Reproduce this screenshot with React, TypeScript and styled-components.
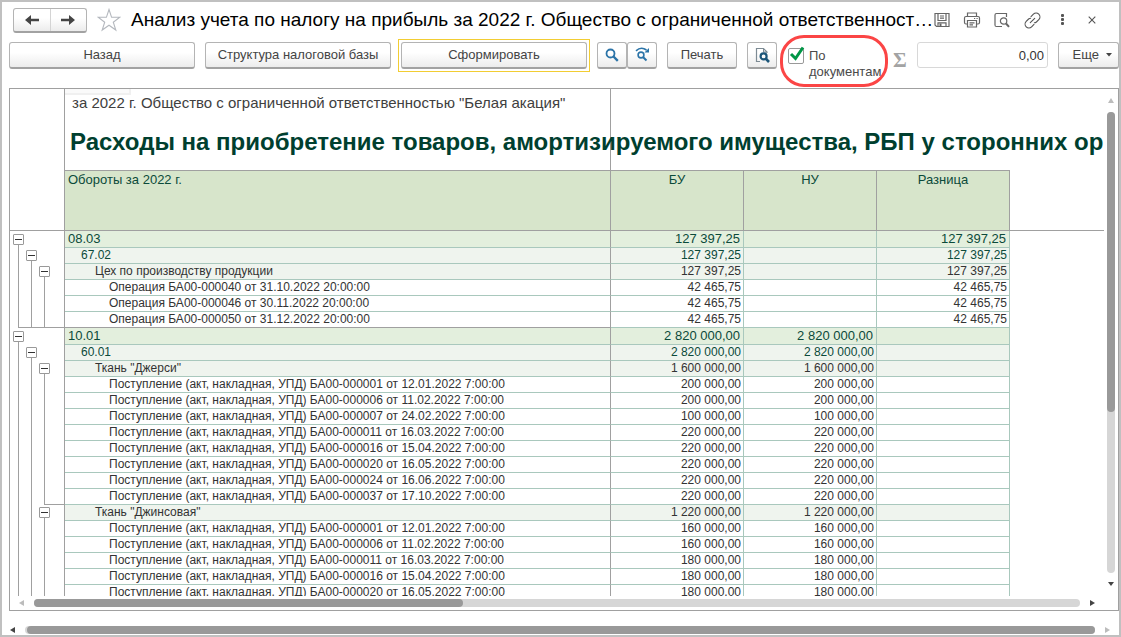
import React from "react";
import styled, { createGlobalStyle, css } from "styled-components";

const sans = `"Liberation Sans", Arial, sans-serif`;
const line = "#a0a0a0";
const cellLine = "#a9c8bd";

const GlobalStyle = createGlobalStyle`
  *, *::before, *::after { box-sizing: border-box; }
  body { margin: 0; background: #fff; font-family: ${sans}; }
  button, input { font-family: inherit; }
`;

const Window = styled.main`
  display: flex;
  flex-direction: column;
  height: 100vh;
  border: 2px solid #c0c0c0;
  background: #fff;
  overflow: hidden;
`;

const TitleBar = styled.header`
  display: flex;
  align-items: center;
  flex: none;
  height: 36px;
  padding: 0 12px 0 11px;
`;

const raised = css`
  border: 1px solid #b4b4b4;
  border-bottom: 2px solid #a2a2a2;
  border-radius: 3px;
  background: linear-gradient(#ffffff 40%, #ececec);
  color: #444;
`;

const NavGroup = styled.nav`
  display: flex;
  width: 74px;
  height: 25px;
  ${raised}
`;

const NavButton = styled.button`
  flex: 1;
  display: flex;
  align-items: center;
  justify-content: center;
  padding: 0;
  border: 0;
  background: none;
  & + & { border-left: 1px solid #d4d4d4; }
`;

const IconButton = styled.button<{ $width?: number }>`
  display: flex;
  align-items: center;
  justify-content: center;
  flex: none;
  width: ${(p) => p.$width ?? 30}px;
  height: 24px;
  padding: 0;
  border: 0;
  background: none;
  color: #555;
`;

const Title = styled.h1`
  flex: 1;
  min-width: 0;
  margin: 0;
  white-space: nowrap;
  font-size: 19px;
  font-weight: 400;
  line-height: 26px;
  color: #000;
`;

const Toolbar = styled.div`
  display: flex;
  align-items: center;
  flex: none;
  height: 34px;
  padding-left: 7px;
  gap: 10px;
`;

const Button = styled.button<{ $width: number }>`
  display: flex;
  align-items: center;
  justify-content: center;
  flex: none;
  width: ${(p) => p.$width}px;
  height: 27px;
  padding: 0;
  font-size: 13px;
  line-height: 16px;
  white-space: nowrap;
  ${raised}
`;

const MoreButton = styled(Button)`
  justify-content: flex-end;
  gap: 7px;
  padding-right: 6px;
`;

const DefaultFrame = styled.div`
  flex: none;
  margin: 0 -3px;
  padding: 2px;
  border: 1px solid #f2cd33;
`;

const ButtonPair = styled.div`
  display: flex;
  flex: none;
`;

const CheckLabel = styled.label`
  position: relative;
  display: flex;
  flex: none;
  gap: 5px;
  width: 97px;
  height: 32px;
  margin: 18px 0 0 1px;
  font-size: 13px;
  line-height: 16px;
  color: #4a4a4a;
`;

const Check = styled.input`
  appearance: none;
  flex: none;
  width: 16px;
  height: 16px;
  margin: 0;
  border: 1px solid #999;
  border-radius: 2px;
  background: #fff;
`;

const CheckMark = styled.svg`
  position: absolute;
  left: 1px;
  top: -2px;
  pointer-events: none;
`;

const Highlight = styled.span`
  position: absolute;
  left: -8px;
  top: -13px;
  width: 108px;
  height: 52px;
  border: 3px solid #fb4545;
  border-radius: 24px;
  pointer-events: none;
`;

const Sigma = styled.span`
  flex: none;
  width: 14px;
  margin: 10px 0 0 -2px;
  font-family: "Liberation Serif", serif;
  font-size: 21px;
  line-height: 24px;
  font-weight: 700;
  color: #a3a3a3;
`;

const Total = styled.input`
  flex: 1;
  min-width: 60px;
  height: 26px;
  padding: 0 3px;
  border: 1px solid #d8d8d8;
  border-radius: 3px;
  text-align: right;
  font-size: 13px;
  color: #333;
`;

const Report = styled.section`
  display: grid;
  grid-template-columns: minmax(0, 1fr) 14px;
  grid-template-rows: minmax(0, 1fr) 14px;
  flex: 1;
  min-height: 0;
  margin: 16px 0 0 7px;
  border: 1px solid ${line};
`;

const Sheet = styled.div`
  overflow: hidden;
`;

const Table = styled.table`
  width: 100%;
  min-width: 1000px;
  table-layout: fixed;
  border-collapse: separate;
  border-spacing: 0;
  font-size: 12px;
  line-height: 15px;
  color: #333;
  td, th { padding: 0; vertical-align: top; white-space: nowrap; }
`;

const TopRow = styled.tr<{ $height: number }>`
  height: ${(p) => p.$height}px;
`;

const TopCell = styled.td<{ $split?: boolean; $rule?: boolean }>`
  ${(p) => p.$split && `border-right: 1px solid ${line};`}
  ${(p) => p.$rule && `border-bottom: 1px solid ${line};`}
`;

const CutBox = styled.div`
  width: 66px;
  height: 6px;
  border: solid #f0f0f0;
  border-width: 0 2px 2px 0;
  background: #fafafa;
`;

const Period = styled.div`
  padding-left: 7px;
  font-size: 15px;
  line-height: 16px;
  color: #404040;
`;

const Heading = styled.h2`
  width: 0;
  margin: 10px 0 0 5px;
  font-size: 24px;
  line-height: 30px;
  color: #003f2f;
`;

const HeadCell = styled.th<{ $left?: boolean }>`
  height: 60px;
  border: solid ${line};
  border-width: 0 1px 1px 0;
  background: #d7e5cb;
  font-weight: 400;
  font-size: 13px;
  line-height: 18px;
  color: #0b4a3a;
  text-align: ${(p) => (p.$left ? "left" : "center")};
  && { padding-left: ${(p) => (p.$left ? 3 : 0)}px; }
`;

const HeadRule = styled.td`
  border-bottom: 1px solid ${line};
`;

const rowTone = ["#e3efdd", "#eff4ee", "#eff4ee", "#ffffff"];
const rowText = ["#0b4a3a", "#0b4a3a", "#333", "#333"];
const indent = [3, 16, 30, 44];

const Row = styled.tr<{ $level: number }>`
  height: ${(p) => (p.$level === 0 ? 17 : 16)}px;
  background: ${(p) => rowTone[p.$level]};
  color: ${(p) => rowText[p.$level]};
  font-size: ${(p) => (p.$level === 0 ? 13 : 12)}px;
  line-height: ${(p) => (p.$level === 0 ? 16 : 15)}px;
`;

const NameCell = styled.td<{ $level: number; $closes: boolean }>`
  border: solid ${line};
  border-width: 0 1px 1px 0;
  border-bottom-color: ${(p) => (p.$closes ? line : cellLine)};
  && { padding-left: ${(p) => indent[p.$level]}px; }
`;

const NumCell = styled.td<{ $level: number }>`
  border: solid ${cellLine};
  border-width: 0 1px 1px 0;
  text-align: right;
  && { padding-right: ${(p) => (p.$level === 0 ? 3 : 2)}px; }
`;

const Blank = styled.td`
  background: #fff;
`;

const GutterCell = styled.td<{ $end?: number }>`
  border-right: 1px solid ${line};
  background: #fff;
  ${(p) =>
    p.$end !== undefined &&
    `background: #fff linear-gradient(${line}, ${line}) no-repeat right bottom / ${46 - 13 * p.$end}px 1px;`}
`;

const GutterHead = styled.td`
  border: solid ${line};
  border-width: 0 1px 1px 0;
`;

const Guides = styled.div<{ $level: number }>`
  display: flex;
  height: ${(p) => (p.$level === 0 ? 17 : 16)}px;
  padding-left: 3px;
`;

const Slot = styled.div<{ $pad: number }>`
  display: flex;
  flex-direction: column;
  width: 13px;
  padding-top: ${(p) => p.$pad}px;
  &::after {
    content: "";
    flex: 1;
    margin-left: 5px;
    border-left: 1px solid ${line};
  }
`;

const Toggle = styled.button`
  display: flex;
  align-items: center;
  justify-content: center;
  flex: none;
  width: 11px;
  height: 11px;
  padding: 0;
  border: 1px solid #999;
  border-radius: 1px;
  background: #fff;
  &::before {
    content: "";
    width: 7px;
    height: 1px;
    background: #333;
  }
`;

const HBar = styled.div<{ $outer?: boolean }>`
  display: flex;
  align-items: center;
  flex: none;
  gap: 10px;
  height: ${(p) => (p.$outer ? 10 : 14)}px;
  margin-top: ${(p) => (p.$outer ? 14 : 0)}px;
  padding: ${(p) => (p.$outer ? "0 9px 0 8px" : "0 9px")};
`;

const VBar = styled.div`
  display: flex;
  flex-direction: column;
  align-items: center;
  gap: 9px;
  padding: 9px 0;
`;

const Track = styled.div<{ $vertical?: boolean; $atEnd?: boolean }>`
  display: flex;
  flex: 1;
  flex-direction: ${(p) => (p.$vertical ? "column" : "row")};
  justify-content: ${(p) => (p.$atEnd ? "flex-end" : "flex-start")};
  ${(p) => (p.$vertical ? "width: 8px;" : "height: 8px;")}
  border-radius: 4px;
  background: #d6d6d6;
`;

const Thumb = styled.div<{ $size: string }>`
  flex: 0 0 ${(p) => p.$size};
  border-radius: 4px;
  background: #999;
`;

const arrowPath = {
  left: "M5 0 L0 3 L5 6 Z",
  right: "M0 0 L5 3 L0 6 Z",
  up: "M0 5 L3 0 L6 5 Z",
  down: "M0 0 L6 0 L3 4 Z",
};

function Arrow({ dir, muted }: { dir: keyof typeof arrowPath; muted?: boolean }) {
  const flat = dir === "left" || dir === "right";
  return (
    <svg width={flat ? 5 : 6} height={flat ? 6 : 5} aria-hidden="true">
      <path d={arrowPath[dir]} fill={muted ? "#bcbcbc" : "#444"} />
    </svg>
  );
}

function NavArrow({ back }: { back?: boolean }) {
  return (
    <svg width="14" height="12" viewBox="0 0 14 12" aria-hidden="true">
      <path
        d={back ? "M0 6 L6 1 V4.7 H14 V7.3 H6 V11 Z" : "M14 6 L8 1 V4.7 H0 V7.3 H8 V11 Z"}
        fill="#444"
      />
    </svg>
  );
}

const stroke = { fill: "none", stroke: "#666", strokeWidth: 1.2 } as const;

function Star() {
  return (
    <svg width="24" height="24" viewBox="0 0 24 24" aria-hidden="true">
      <path d="M12 1.5 L14.6 9.3 H22.8 L16.3 14.2 L18.8 22 L12 17.2 L5.2 22 L7.7 14.2 L1.2 9.3 H9.4 Z" fill="none" stroke="#b4b8be" strokeWidth="1.1" />
    </svg>
  );
}

function SaveIcon() {
  return (
    <svg width="16" height="16" viewBox="0 0 16 16" {...stroke} aria-hidden="true">
      <path d="M1 1.5 H15 V14.5 H2.5 L1 13 Z M4 1.5 V8.5 H12 V1.5 M6 4 H10 M6 6.2 H10 M4 14.5 V10.8 H12 V14.5" />
      <path d="M6.5 11.5 V14" strokeWidth="2" />
    </svg>
  );
}

function PrintIcon() {
  return (
    <svg width="18" height="16" viewBox="0 0 18 16" {...stroke} aria-hidden="true">
      <path d="M4.5 4.5 V1 H13.5 V4.5 M4.5 12 H3 Q1.5 12 1.5 10.5 V6 Q1.5 4.5 3 4.5 H15 Q16.5 4.5 16.5 6 V10.5 Q16.5 12 15 12 H13.5 M4.5 8.5 H13.5 V15 H4.5 Z M6.5 10.8 H11.5 M6.5 12.9 H10 M11 6.5 H12.2 M13.5 6.5 H14.7" />
    </svg>
  );
}

function PreviewIcon() {
  return (
    <svg width="16" height="16" viewBox="0 0 16 16" {...stroke} aria-hidden="true">
      <path d="M8 14.5 H2.5 Q1 14.5 1 13 V3 Q1 1.5 2.5 1.5 H12.5 V5" />
      <circle cx="9.6" cy="9" r="3.2" />
      <path d="M12 11.5 L15 14.8" strokeWidth="2" />
    </svg>
  );
}

function LinkIcon() {
  return (
    <svg width="17" height="17" viewBox="0 0 17 17" fill="none" stroke="#555" strokeWidth="1.1" strokeLinecap="round" aria-hidden="true">
      <path d="M7 4.6 L9.4 2.2 A3.5 3.5 0 0 1 14.8 7.6 L12.4 10 A3.4 3.4 0 0 1 10.4 10.8" />
      <path d="M10 12.4 L7.6 14.8 A3.5 3.5 0 0 1 2.2 9.4 L4.6 7 A3.4 3.4 0 0 1 6.6 6.2" />
      <path d="M6.3 10.7 L10.7 6.3" />
    </svg>
  );
}

function DotsIcon() {
  return (
    <svg width="3" height="12" fill="#555" aria-hidden="true">
      <rect x="0" y="0" width="3" height="3" rx="1" />
      <rect x="0" y="4" width="3" height="3" rx="1" />
      <rect x="0" y="8" width="3" height="3" rx="1" />
    </svg>
  );
}

function CloseIcon() {
  return (
    <svg width="8" height="8" viewBox="0 0 8 8" stroke="#555" strokeWidth="1.1" aria-hidden="true">
      <path d="M0.7 0.7 L7.3 7.3 M7.3 0.7 L0.7 7.3" />
    </svg>
  );
}

function SearchIcon() {
  return (
    <svg width="14" height="14" viewBox="0 0 14 14" fill="none" stroke="#2b74a8" aria-hidden="true">
      <circle cx="5.5" cy="5.5" r="4" strokeWidth="1.8" />
      <path d="M8.5 8.5 L12.8 12.8" strokeWidth="2.4" />
    </svg>
  );
}

function SearchNextIcon() {
  return (
    <svg width="15" height="15" viewBox="0 0 15 15" fill="none" stroke="#2b74a8" aria-hidden="true">
      <path d="M1 3.8 Q6 -0.8 11.5 3" strokeWidth="1.6" />
      <path d="M14 1 V5.4 H9.4 Z" fill="#2b74a8" stroke="none" />
      <circle cx="6" cy="8" r="2.9" strokeWidth="1.6" />
      <path d="M8.2 10.2 L11.5 13.5" strokeWidth="2" />
    </svg>
  );
}

function PageSearchIcon() {
  return (
    <svg width="15" height="16" viewBox="0 0 15 16" fill="none" aria-hidden="true">
      <path d="M5 14.5 H1.5 V1.5 H8.5 L12 5 V6" stroke="#7d8b94" strokeWidth="1.2" />
      <path d="M8.5 1.5 V5 H12" stroke="#7d8b94" />
      <circle cx="8.6" cy="9.4" r="3" stroke="#1c5679" strokeWidth="2.2" />
      <path d="M10.8 11.6 L14 15" stroke="#1c5679" strokeWidth="2.6" />
    </svg>
  );
}

type Item = { level: number; name: string; bu: string; nu?: string; diff?: string; end?: number };

const receipt = (doc: string, date: string, sum: string, end?: number): Item => ({
  level: 3,
  name: `Поступление (акт, накладная, УПД) БА00-${doc} от ${date} 7:00:00`,
  bu: sum,
  nu: sum,
  end,
});

const operation = (doc: string, date: string, end?: number): Item => ({
  level: 3,
  name: `Операция БА00-${doc} от ${date} 20:00:00`,
  bu: "42 465,75",
  diff: "42 465,75",
  end,
});

const items: Item[] = [
  { level: 0, name: "08.03", bu: "127 397,25", diff: "127 397,25" },
  { level: 1, name: "67.02", bu: "127 397,25", diff: "127 397,25" },
  { level: 2, name: "Цех по производству продукции", bu: "127 397,25", diff: "127 397,25" },
  operation("000040", "31.10.2022"),
  operation("000046", "30.11.2022"),
  operation("000050", "31.12.2022", 0),
  { level: 0, name: "10.01", bu: "2 820 000,00", nu: "2 820 000,00" },
  { level: 1, name: "60.01", bu: "2 820 000,00", nu: "2 820 000,00" },
  { level: 2, name: 'Ткань "Джерси"', bu: "1 600 000,00", nu: "1 600 000,00" },
  receipt("000001", "12.01.2022", "200 000,00"),
  receipt("000006", "11.02.2022", "200 000,00"),
  receipt("000007", "24.02.2022", "100 000,00"),
  receipt("000011", "16.03.2022", "220 000,00"),
  receipt("000016", "15.04.2022", "220 000,00"),
  receipt("000020", "16.05.2022", "220 000,00"),
  receipt("000024", "16.06.2022", "220 000,00"),
  receipt("000037", "17.10.2022", "220 000,00", 2),
  { level: 2, name: 'Ткань "Джинсовая"', bu: "1 220 000,00", nu: "1 220 000,00" },
  receipt("000001", "12.01.2022", "160 000,00"),
  receipt("000006", "11.02.2022", "160 000,00"),
  receipt("000011", "16.03.2022", "180 000,00"),
  receipt("000016", "15.04.2022", "180 000,00"),
  receipt("000020", "16.05.2022", "180 000,00"),
];

function ReportRow({ item }: { item: Item }) {
  const { level, name, bu, nu, diff, end } = item;
  const slots = [0, 1, 2].filter((n) => n <= level);
  const togglePad = level === 0 ? 3 : 2;
  return (
    <Row $level={level}>
      <GutterCell $end={end}>
        <Guides $level={level}>
          {slots.map((n) => (
            <Slot key={n} $pad={n === level ? togglePad : 0}>
              {n === level && <Toggle aria-label={`Свернуть ${name}`} />}
            </Slot>
          ))}
        </Guides>
      </GutterCell>
      <NameCell $level={level} $closes={end === 0}>{name}</NameCell>
      <NumCell $level={level}>{bu}</NumCell>
      <NumCell $level={level}>{nu}</NumCell>
      <NumCell $level={level}>{diff}</NumCell>
      <Blank />
    </Row>
  );
}

export default function App() {
  return (
    <>
      <GlobalStyle />
      <Window>
        <TitleBar>
          <NavGroup>
            <NavButton aria-label="Назад"><NavArrow back /></NavButton>
            <NavButton aria-label="Вперед"><NavArrow /></NavButton>
          </NavGroup>
          <IconButton $width={44} aria-label="В избранное"><Star /></IconButton>
          <Title>Анализ учета по налогу на прибыль за 2022 г. Общество с ограниченной ответственност…</Title>
          <IconButton aria-label="Сохранить"><SaveIcon /></IconButton>
          <IconButton aria-label="Печать"><PrintIcon /></IconButton>
          <IconButton aria-label="Просмотр"><PreviewIcon /></IconButton>
          <IconButton aria-label="Ссылка"><LinkIcon /></IconButton>
          <IconButton aria-label="Меню"><DotsIcon /></IconButton>
          <IconButton aria-label="Закрыть"><CloseIcon /></IconButton>
        </TitleBar>

        <Toolbar>
          <Button $width={186}>Назад</Button>
          <Button $width={186}>Структура налоговой базы</Button>
          <DefaultFrame><Button $width={186}>Сформировать</Button></DefaultFrame>
          <ButtonPair>
            <Button $width={30} aria-label="Найти"><SearchIcon /></Button>
            <Button $width={30} aria-label="Найти далее"><SearchNextIcon /></Button>
          </ButtonPair>
          <Button $width={70}>Печать</Button>
          <Button $width={30} aria-label="Предварительный просмотр"><PageSearchIcon /></Button>
          <CheckLabel>
            <Check type="checkbox" defaultChecked />
            <CheckMark width="16" height="16" viewBox="0 0 16 16" aria-hidden="true">
              <path d="M2 8 L6.5 12.5 L14 1.5" fill="none" stroke="#009646" strokeWidth="3" />
            </CheckMark>
            <span>По документам</span>
            <Highlight />
          </CheckLabel>
          <Sigma>Σ</Sigma>
          <Total aria-label="Сумма" defaultValue="0,00" />
          <MoreButton $width={61}>
            Еще
            <svg width="6" height="4" aria-hidden="true"><path d="M0 0 H6 L3 3.5 Z" fill="#444" /></svg>
          </MoreButton>
        </Toolbar>

        <Report>
          <Sheet>
            <Table>
              <colgroup>
                <col style={{ width: 55 }} />
                <col style={{ width: 546 }} />
                <col style={{ width: 133 }} />
                <col style={{ width: 133 }} />
                <col style={{ width: 133 }} />
                <col />
              </colgroup>
              <thead>
                <TopRow $height={28}>
                  <GutterCell />
                  <TopCell $split>
                    <CutBox />
                    <Period>за 2022 г. Общество с ограниченной ответственностью "Белая акация"</Period>
                  </TopCell>
                  <TopCell colSpan={4} />
                </TopRow>
                <TopRow $height={54}>
                  <GutterCell />
                  <TopCell $split $rule>
                    <Heading>Расходы на приобретение товаров, амортизируемого имущества, РБП у сторонних организаций</Heading>
                  </TopCell>
                  <TopCell $rule colSpan={3} />
                  <TopCell />
                </TopRow>
                <tr>
                  <GutterHead />
                  <HeadCell $left>Обороты за 2022 г.</HeadCell>
                  <HeadCell>БУ</HeadCell>
                  <HeadCell>НУ</HeadCell>
                  <HeadCell>Разница</HeadCell>
                  <HeadRule />
                </tr>
              </thead>
              <tbody>
                {items.map((item, i) => <ReportRow key={i} item={item} />)}
              </tbody>
            </Table>
          </Sheet>
          <VBar>
            <Arrow dir="up" muted />
            <Track $vertical><Thumb $size="65%" /></Track>
            <Arrow dir="down" />
          </VBar>
          <HBar>
            <Arrow dir="left" muted />
            <Track><Thumb $size="41%" /></Track>
            <Arrow dir="right" />
          </HBar>
        </Report>

        <HBar $outer>
          <Arrow dir="left" />
          <Track $atEnd><Thumb $size="99.8%" /></Track>
          <Arrow dir="right" muted />
        </HBar>
      </Window>
    </>
  );
}
